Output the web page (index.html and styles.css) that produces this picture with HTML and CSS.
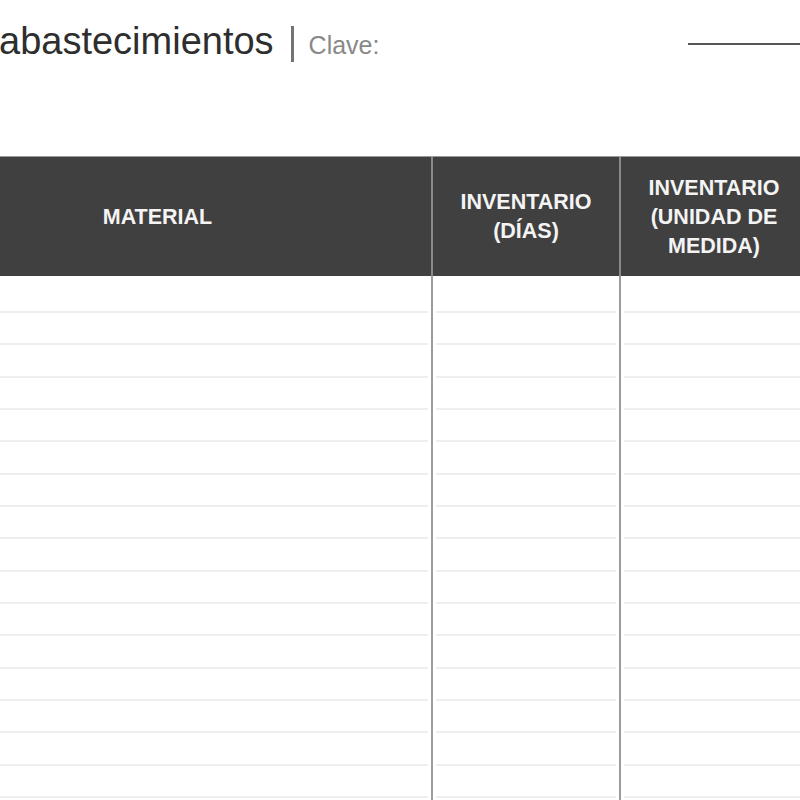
FILE: index.html
```html
<!DOCTYPE html>
<html lang="es">
<head>
<meta charset="utf-8">
<title>Abastecimientos</title>
<link rel="stylesheet" href="styles.css">
</head>
<body>
<div class="page">
  <div class="top">
    <div class="title-group"><span class="title">abastecimientos</span><span class="bar"></span><span class="clave">Clave:</span></div>
    <div class="fill-line"></div>
  </div>
  <div class="sheet">
    <div class="thead">
      <div class="th">MATERIAL</div>
      <div class="th-sep"></div>
      <div class="th">INVENTARIO (DÍAS)</div>
      <div class="th-sep"></div>
      <div class="th">INVENTARIO (UNIDAD DE MEDIDA)</div>
    </div>
    <div class="tbody">
      <div class="vline c2"></div>
      <div class="vline c4"></div>
      <div class="td"></div><div class="td"></div><div class="td"></div>
      <div class="td"></div><div class="td"></div><div class="td"></div>
      <div class="td"></div><div class="td"></div><div class="td"></div>
      <div class="td"></div><div class="td"></div><div class="td"></div>
      <div class="td"></div><div class="td"></div><div class="td"></div>
      <div class="td"></div><div class="td"></div><div class="td"></div>
      <div class="td"></div><div class="td"></div><div class="td"></div>
      <div class="td"></div><div class="td"></div><div class="td"></div>
      <div class="td"></div><div class="td"></div><div class="td"></div>
      <div class="td"></div><div class="td"></div><div class="td"></div>
      <div class="td"></div><div class="td"></div><div class="td"></div>
      <div class="td"></div><div class="td"></div><div class="td"></div>
      <div class="td"></div><div class="td"></div><div class="td"></div>
      <div class="td"></div><div class="td"></div><div class="td"></div>
      <div class="td"></div><div class="td"></div><div class="td"></div>
      <div class="td"></div><div class="td"></div><div class="td"></div>
      <div class="td"></div><div class="td"></div><div class="td"></div>
    </div>
  </div>
</div>
</body>
</html>
```

FILE: styles.css
```css
html, body {
  margin: 0;
  padding: 0;
  background: #ffffff;
}

body {
  width: 800px;
  height: 800px;
  overflow: hidden;
  font-family: "Liberation Sans", Arial, sans-serif;
}

.page {
  width: 800px;
  overflow: hidden;
}

.top {
  height: 156px;
  display: flex;
  align-items: flex-start;
}

.title-group {
  padding-top: 19px;
  margin-left: -1px;
  line-height: 44px;
  white-space: nowrap;
}

.title {
  font-size: 38px;
  color: #2e2e2e;
}

.bar {
  display: inline-block;
  width: 3px;
  height: 36px;
  margin-left: 17px;
  background: #737373;
  vertical-align: -8px;
}

.clave {
  margin-left: 15px;
  font-size: 25px;
  color: #888888;
}

.fill-line {
  margin-left: auto;
  margin-top: 43px;
  width: 112px;
  height: 2px;
  background: #555555;
  flex-shrink: 0;
}

.sheet {
  margin-left: -116px;
  width: 923px;
}

.thead,
.tbody {
  display: grid;
  grid-template-columns: 547px 2px 186px 2px 186px;
}

.thead {
  border-top: 1px solid #9a9a9a;
  height: 119px;
}

.th {
  background: #404040;
  color: #f4f4f4;
  font-weight: bold;
  font-size: 21.5px;
  line-height: 29px;
  text-align: center;
  display: flex;
  align-items: center;
  justify-content: center;
  padding: 1px 10px 0;
}

.th-sep {
  background: #8a8a8a;
}

.tbody {
  grid-template-rows: 37px repeat(16, 32.33px);
}

.vline {
  grid-row: 1 / -1;
  background: #9c9c9c;
}

.vline.c2 {
  grid-column: 2;
}

.vline.c4 {
  grid-column: 4;
}

.td {
  margin: 0 3px;
  border-bottom: 2px solid #eeeeee;
}
```
